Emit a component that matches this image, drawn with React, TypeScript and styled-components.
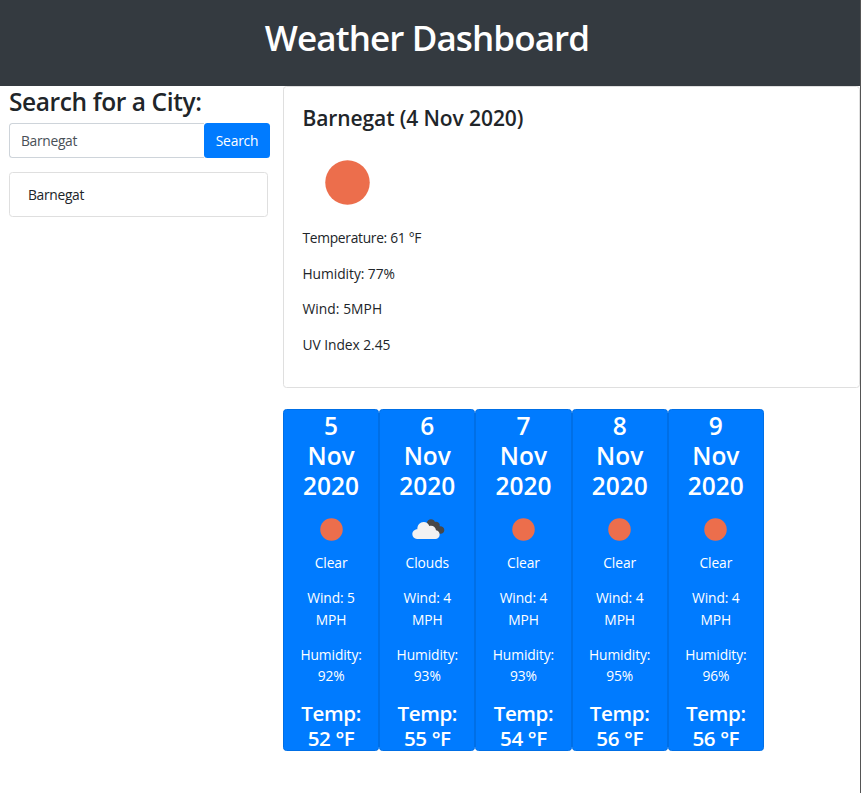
import React, { useState } from "react";
import styled, { createGlobalStyle } from "styled-components";

const GlobalStyle = createGlobalStyle`
  *, *::before, *::after { box-sizing: border-box; }
  body {
    margin: 0;
    background: #fff;
    color: #212529;
    font-family: "Open Sans", "Noto Sans", sans-serif;
    font-size: 13.8px;
    line-height: 21.33px;
  }
  h1, h2, h3, h4, p { margin: 0; }
`;

const Page = styled.div`
  min-height: 793px;
  border-right: 1px solid #555;
`;

const Header = styled.header`
  height: 86px;
  padding: 17px 6px 0 0;
  background: #343a40;
  color: #fff;
  text-align: center;
`;

const Title = styled.h1`
  font-size: 35px;
  font-weight: 600;
  line-height: 42px;
  letter-spacing: -0.9px;
`;

const Columns = styled.div`
  display: flex;
  align-items: flex-start;
`;

const Sidebar = styled.aside`
  width: 283px;
  flex: none;
  padding: 1px 13px 0 9px;
`;

const SearchHeading = styled.h3`
  font-size: 24.5px;
  font-weight: 600;
  line-height: 30px;
  letter-spacing: -0.4px;
  white-space: nowrap;
`;

const SearchForm = styled.form`
  display: flex;
  height: 35px;
  margin-top: 6px;
`;

const CityInput = styled.input`
  width: 195px;
  height: 35px;
  padding: 0 11px;
  border: 1px solid #ced4da;
  border-right: 0;
  border-radius: 3.5px 0 0 3.5px;
  background: #fff;
  color: #495057;
  font: inherit;
  letter-spacing: -0.3px;
  outline: 0;
`;

const SearchButton = styled.button`
  width: 66px;
  height: 35px;
  padding: 0;
  border: 0;
  border-radius: 3.5px;
  background: #007bff;
  color: #fff;
  font: inherit;
  letter-spacing: -0.2px;
`;

const HistoryCard = styled.div`
  width: 259px;
  height: 45px;
  margin-top: 14px;
  padding: 11px 18px;
  border: 1px solid #dfdfdf;
  border-radius: 3.5px;
  letter-spacing: -0.3px;
`;

const Main = styled.main`
  flex: 1;
`;

const CurrentCard = styled.section`
  height: 302px;
  padding: 19px 18.5px 0;
  border: 1px solid #dfdfdf;
  border-radius: 3.5px;
`;

const CityName = styled.h4`
  font-size: 21px;
  font-weight: 600;
  line-height: 25.6px;
  letter-spacing: -0.1px;
`;

const CurrentIcon = styled.div`
  height: 89.4px;
  margin-top: 6px;
`;

const Reading = styled.p<{ $spacing?: string }>`
  height: 35.55px;
  letter-spacing: ${({ $spacing }) => $spacing ?? "-0.05px"};
`;

const Forecast = styled.section`
  display: flex;
  margin-top: 21px;
`;

const DayCard = styled.article`
  width: 96.2px;
  height: 342px;
  padding: 1px 0 0;
  border: 1px solid #006fe6;
  border-radius: 3.5px;
  background: #007bff;
  color: #fff;
  text-align: center;
`;

const DayDate = styled.h3`
  width: 60px;
  margin: 0 auto;
  font-size: 24.5px;
  font-weight: 600;
  line-height: 30px;
`;

const DayIcon = styled.div`
  display: flex;
  justify-content: center;
  height: 45.4px;
  margin-top: 5.5px;
`;

const DayText = styled.p<{ $wide?: boolean }>`
  width: ${({ $wide }) => ($wide ? "70px" : "54px")};
  margin: 0 auto 14.3px;
  line-height: 21.2px;
  letter-spacing: -0.1px;
`;

const DayTemp = styled.h4`
  width: 64px;
  margin: 0 auto;
  font-size: 20.6px;
  font-weight: 600;
  line-height: 25px;
  letter-spacing: -0.4px;
  white-space: nowrap;
`;

function Sun({ size }: { size: number }) {
  return (
    <svg width={size} height={size} viewBox="0 0 100 100">
      <circle cx="50" cy="50" r="25" fill="#ec6e4c" />
    </svg>
  );
}

function Clouds() {
  return (
    <svg width="44" height="44" viewBox="14 -8 132 132">
      <path
        fill="#484848"
        d="M79 42C80 33 86 29 92 29c6 0 10 3 12 8 6-2 12 1 14 7 0 3 0 4 0 6 7-1 14 4 14 11s-5 11-11 11H105Z"
      />
      <path
        fill="#f2f2f2"
        d="M50 88c-8 0-14-6-14-14s6-15 15-15C51 46 59 37 70 37c8 0 14 4 17 12 10-3 19 3 20 13 7 1 11 6 11 13s-6 13-13 13Z"
      />
    </svg>
  );
}

const days = [
  { day: 5, sky: "Clear", wind: 5, humidity: 92, temp: 52 },
  { day: 6, sky: "Clouds", wind: 4, humidity: 93, temp: 55 },
  { day: 7, sky: "Clear", wind: 4, humidity: 93, temp: 54 },
  { day: 8, sky: "Clear", wind: 4, humidity: 95, temp: 56 },
  { day: 9, sky: "Clear", wind: 4, humidity: 96, temp: 56 },
];

export default function App() {
  const [city, setCity] = useState("Barnegat");
  return (
    <Page>
      <GlobalStyle />
      <Header>
        <Title>Weather Dashboard</Title>
      </Header>
      <Columns>
        <Sidebar>
          <SearchHeading>Search for a City:</SearchHeading>
          <SearchForm onSubmit={(e) => e.preventDefault()}>
            <CityInput value={city} onChange={(e) => setCity(e.target.value)} />
            <SearchButton type="submit">Search</SearchButton>
          </SearchForm>
          <HistoryCard>Barnegat</HistoryCard>
        </Sidebar>
        <Main>
          <CurrentCard>
            <CityName>Barnegat (4 Nov 2020)</CityName>
            <CurrentIcon>
              <Sun size={89} />
            </CurrentIcon>
            <Reading $spacing="-0.3px">Temperature: 61 °F</Reading>
            <Reading>Humidity: 77%</Reading>
            <Reading $spacing="0.05px">Wind: 5MPH</Reading>
            <Reading>UV Index 2.45</Reading>
          </CurrentCard>
          <Forecast>
            {days.map((d) => (
              <DayCard key={d.day}>
                <DayDate>
                  {d.day}
                  <br />
                  Nov
                  <br />
                  2020
                </DayDate>
                <DayIcon>{d.sky === "Clouds" ? <Clouds /> : <Sun size={45} />}</DayIcon>
                <DayText>{d.sky}</DayText>
                <DayText>Wind: {d.wind} MPH</DayText>
                <DayText $wide>Humidity: {d.humidity}%</DayText>
                <DayTemp>
                  Temp:
                  <br />
                  {d.temp} °F
                </DayTemp>
              </DayCard>
            ))}
          </Forecast>
        </Main>
      </Columns>
    </Page>
  );
}
